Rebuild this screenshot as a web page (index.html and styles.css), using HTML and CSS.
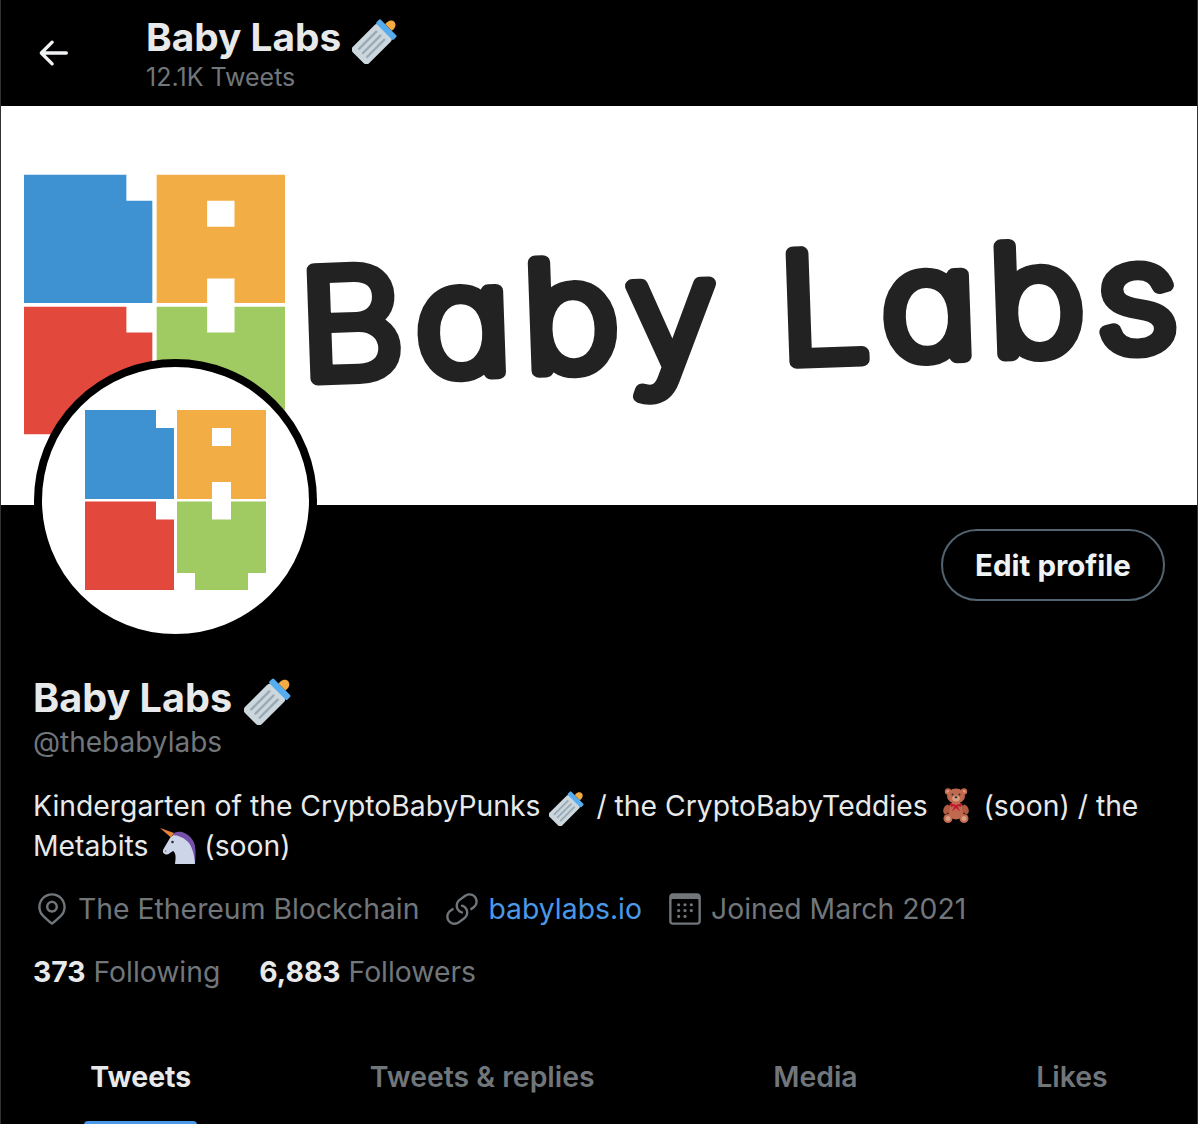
FILE: index.html
```html
<!DOCTYPE html>
<html lang="en">
<head>
  <meta charset="UTF-8">
  <title>Baby Labs (@thebabylabs)</title>
  <link rel="stylesheet" href="styles.css">
</head>
<body>
  <!-- shared drawings -->
  <svg class="defs" width="0" height="0" aria-hidden="true">
    <symbol id="logo" viewBox="0 0 181 180">
      <path fill="#3f92d2" d="M0 0H71V18H89V89H0Z"/>
      <path fill="#f2ae44" fill-rule="evenodd" d="M92 0H181V89H146V72H127V89H92ZM127 18V36H146V18Z"/>
      <path fill="#e2483b" d="M0 91.500H71V109.500H89V180H0Z"/>
      <path fill="#a0cb62" d="M92 91.500H127V109.500H146V91.500H181V163H163V180H110V163H92Z"/>
    </symbol>
    <symbol id="bottle" viewBox="0 0 36 36">
      <g transform="rotate(45 18 18)">
        <rect x="9.500" y="9" width="17" height="28" rx="3" fill="#ccd6dd"/>
        <path stroke="#99aab5" stroke-width="1.700" stroke-linecap="round" d="M13.800 14V32M18 14V32M22.200 14V32"/>
        <rect x="9" y="5.500" width="18" height="4.500" rx="1" fill="#55acee"/>
        <path fill="#f4ab43" d="M14.500 5.500V3.500C14.500 1 16.500-.5 18-.5S21.500 1 21.500 3.500V5.500Z"/>
      </g>
    </symbol>
    <symbol id="teddy" viewBox="0 0 28 36">
      <circle cx="6" cy="4" r="3.200" fill="#c1694f"/>
      <circle cx="22" cy="4" r="3.200" fill="#c1694f"/>
      <circle cx="6" cy="4" r="1.500" fill="#d99e82"/>
      <circle cx="22" cy="4" r="1.500" fill="#d99e82"/>
      <ellipse cx="14" cy="23" rx="8" ry="9" fill="#c1694f"/>
      <ellipse cx="14" cy="8.500" rx="9" ry="7.500" fill="#c1694f"/>
      <ellipse cx="14" cy="11" rx="3.800" ry="3" fill="#d99e82"/>
      <circle cx="10.500" cy="7" r="1" fill="#292f33"/>
      <circle cx="17.500" cy="7" r="1" fill="#292f33"/>
      <ellipse cx="14" cy="9.800" rx="1.400" ry="1" fill="#292f33"/>
      <ellipse cx="4.500" cy="22" rx="3" ry="5" fill="#af5a41" transform="rotate(20 4.500 22)"/>
      <ellipse cx="23.500" cy="22" rx="3" ry="5" fill="#af5a41" transform="rotate(-20 23.500 22)"/>
      <path fill="#be1931" d="M7.500 15.500 14 17.500 20.500 15.500 19 19.500 15.500 18.500 18 24 14 20.500 10 24 12.500 18.500 9 19.500Z"/>
      <circle cx="6" cy="31" r="4.500" fill="#c1694f"/>
      <circle cx="22" cy="31" r="4.500" fill="#c1694f"/>
      <circle cx="6" cy="31" r="2.500" fill="#d99e82"/>
      <circle cx="22" cy="31" r="2.500" fill="#d99e82"/>
    </symbol>
    <symbol id="unicorn" viewBox="0 0 36 36">
      <path fill="#ccd6e8" d="M35 36H15C16 29 16 25 13 23 11 24 8.500 27 6 26.500 3.500 26 2 24 3.500 21L10 10C13 6 18 5 23 7 30 10 35 18 35 26Z"/>
      <path fill="#7450a8" d="M12 7C14 4 18 3 22 4 29 6 34 12 35 18 36 24 35.500 30 35 36 34.500 28 33 21 29 15 25 10 18 7 12 7Z"/>
      <path fill="#e8833a" d="M0 0 14 5 11 9.500Z"/>
      <circle cx="12.500" cy="14" r="1.300" fill="#292f33"/>
      <circle cx="5.500" cy="23" r=".8" fill="#66757f"/>
    </symbol>
  </svg>

  <div class="page">
    <header class="topbar">
      <svg class="back" viewBox="0 0 24 24"><path d="M20 12H5M11.500 5.500 5 12l6.500 6.500"/></svg>
      <div class="topbar-text">
        <div class="title">Baby Labs <svg class="emoji emoji-title"><use href="#bottle"/></svg></div>
        <div class="tweet-count">12.1K Tweets</div>
      </div>
    </header>

    <div class="banner">
      <svg class="banner-logo"><use href="#logo"/></svg>
      <svg class="banner-word" viewBox="0 0 880 200">
        <text transform="translate(-2 173) rotate(-2) scale(1.09 1)">Baby Labs</text>
      </svg>
    </div>

    <section class="profile">
      <div class="avatar"><svg class="avatar-logo"><use href="#logo"/></svg></div>
      <div class="actions"><button class="edit-btn">Edit profile</button></div>

      <h1 class="name">Baby Labs <svg class="emoji emoji-title"><use href="#bottle"/></svg></h1>
      <div class="handle">@thebabylabs</div>

      <p class="bio">Kindergarten of the CryptoBabyPunks <svg class="emoji emoji-bio"><use href="#bottle"/></svg> / the CryptoBabyTeddies <svg class="emoji emoji-teddy"><use href="#teddy"/></svg> (soon) / the<br>Metabits <svg class="emoji emoji-unicorn"><use href="#unicorn"/></svg> (soon)</p>

      <div class="meta">
        <span class="meta-item">
          <svg class="meta-icon" viewBox="0 0 24 24"><path d="M12 14.315c-2.088 0-3.787-1.698-3.787-3.786S9.913 6.740 12 6.740s3.787 1.700 3.787 3.787-1.700 3.785-3.787 3.785zm0-6.073c-1.260 0-2.287 1.026-2.287 2.287S10.740 12.814 12 12.814s2.287-1.025 2.287-2.286S13.260 8.240 12 8.240z"/><path d="M20.692 10.690C20.692 5.900 16.792 2 12 2s-8.692 3.900-8.692 8.690c0 1.902.603 3.708 1.743 5.223l.003-.002.007.015c1.628 2.070 6.278 5.757 6.475 5.912.138.110.302.163.465.163.163 0 .327-.053.465-.162.197-.155 4.847-3.840 6.475-5.912l.007-.014.002.002c1.140-1.516 1.742-3.320 1.742-5.223zM12 20.290c-1.224-.990-4.520-3.715-5.756-5.285-.940-1.250-1.436-2.742-1.436-4.312C4.808 6.727 8.035 3.500 12 3.500s7.192 3.226 7.192 7.190c0 1.570-.497 3.062-1.436 4.313-1.236 1.570-4.532 4.294-5.756 5.285z"/></svg>
          The Ethereum Blockchain
        </span>
        <span class="meta-item">
          <svg class="meta-icon" viewBox="0 0 24 24"><path d="M11.960 14.945c-.067 0-.136-.010-.203-.027-1.130-.318-2.097-.986-2.795-1.932-.832-1.125-1.176-2.508-.968-3.893s.942-2.605 2.068-3.438l3.530-2.608c2.322-1.716 5.610-1.224 7.330 1.100.830 1.127 1.175 2.510.967 3.895s-.943 2.605-2.070 3.438l-1.480 1.094c-.333.246-.804.175-1.050-.158-.246-.334-.176-.804.158-1.050l1.480-1.095c.803-.592 1.327-1.463 1.476-2.450.148-.988-.098-1.975-.690-2.778-1.225-1.656-3.572-2.010-5.230-.784l-3.530 2.608c-.802.593-1.326 1.464-1.475 2.450-.150.990.097 1.975.690 2.778.498.675 1.187 1.150 1.992 1.377.400.114.633.528.520.928-.092.330-.394.547-.722.547z"/><path d="M7.270 22.054c-1.610 0-3.197-.735-4.225-2.125-.832-1.127-1.176-2.510-.968-3.894s.943-2.605 2.070-3.438l1.478-1.094c.334-.245.805-.175 1.050.158s.177.804-.157 1.050l-1.480 1.095c-.803.593-1.326 1.464-1.475 2.450-.148.990.097 1.975.690 2.778 1.225 1.657 3.570 2.010 5.230.785l3.528-2.608c1.658-1.225 2.010-3.570.785-5.230-.498-.674-1.187-1.150-1.992-1.376-.400-.113-.633-.527-.520-.927.112-.400.528-.630.926-.522 1.130.318 2.096.986 2.794 1.932 1.717 2.324 1.224 5.612-1.100 7.330l-3.530 2.608c-.933.693-2.023 1.026-3.105 1.026z"/></svg>
          <a class="link" href="#">babylabs.io</a>
        </span>
        <span class="meta-item">
          <svg class="meta-icon" viewBox="0 0 24 24"><path d="M19.708 2H4.292C3.028 2 2 3.028 2 4.292v15.416C2 20.972 3.028 22 4.292 22h15.416C20.972 22 22 20.972 22 19.708V4.292C22 3.028 20.972 2 19.708 2zm.792 17.708c0 .437-.355.792-.792.792H4.292c-.437 0-.792-.355-.792-.792V6.418c0-.437.354-.790.790-.792h15.420c.436 0 .790.355.790.790V19.710z"/><circle cx="8" cy="9.300" r="1"/><circle cx="12" cy="9.300" r="1"/><circle cx="16" cy="9.300" r="1"/><circle cx="8" cy="13" r="1"/><circle cx="12" cy="13" r="1"/><circle cx="16" cy="13" r="1"/><circle cx="8" cy="16.700" r="1"/><circle cx="12" cy="16.700" r="1"/></svg>
          Joined March 2021
        </span>
      </div>

      <div class="stats">
        <span class="stat"><b>373</b> Following</span>
        <span class="stat"><b>6,883</b> Followers</span>
      </div>
    </section>

    <nav class="tabs">
      <a class="tab active" href="#"><span>Tweets</span></a>
      <a class="tab" href="#"><span>Tweets &amp; replies</span></a>
      <a class="tab" href="#"><span>Media</span></a>
      <a class="tab" href="#"><span>Likes</span></a>
    </nav>
  </div>
</body>
</html>
```

FILE: styles.css
```css
* {
  box-sizing: border-box;
}
html, body {
  margin: 0;
  padding: 0;
  background-color: #000;
}
body {
  font-family: Inter, "Liberation Sans", sans-serif;
  color: #e7e9ea;
  overflow: hidden;
}
.defs {
  position: absolute;
}
.page {
  height: 1124px;
  overflow: hidden;
  border-left: 1px solid #2f3336;
  border-right: 1px solid #2f3336;
}

/* top bar */
.topbar {
  display: flex;
  align-items: center;
  height: 105px;
  padding-left: 32px;
}
.back {
  width: 40px;
  height: 40px;
  margin-right: 73px;
  fill: none;
  stroke: #eff3f4;
  stroke-width: 2;
  stroke-linecap: round;
  stroke-linejoin: round;
}
.topbar-text {
  padding-top: 3px;
}
.title {
  font-size: 38.800px;
  font-weight: 700;
  line-height: 44px;
  color: #e7e9ea;
}
.tweet-count {
  margin-top: 2px;
  font-size: 25px;
  line-height: 32px;
  color: #71767b;
}
.emoji {
  display: inline-block;
  overflow: visible;
}
.emoji-title {
  width: 49px;
  height: 49px;
  vertical-align: 1px;
  margin: -14px 0 -14px 2px;
}
.name .emoji-title {
  width: 51px;
  height: 51px;
  margin-left: 3px;
}
.emoji-bio {
  width: 38px;
  height: 38px;
  vertical-align: -8px;
  margin: -2px 1px;
}
.emoji-unicorn {
  width: 36px;
  height: 36px;
  vertical-align: -8px;
  margin: 0 0 0 4px;
}
.emoji-teddy {
  width: 28px;
  height: 37px;
  vertical-align: -8px;
  margin: 0 6px;
}

/* banner */
.banner {
  display: flex;
  align-items: center;
  height: 399px;
  margin-top: 1px;
  padding-left: 23px;
  background-color: #fff;
}
.banner-logo {
  flex: none;
  width: 261px;
  height: 261px;
  margin-top: -2px;
}
.banner-word {
  flex: none;
  width: 880px;
  height: 200px;
  margin-left: 18px;
  overflow: visible;
}
.banner-word text {
  font-family: Inter, sans-serif;
  font-size: 149px;
  font-weight: 200;
  font-feature-settings: "cv11";
  letter-spacing: 10.500px;
  word-spacing: -6px;
  fill: #222;
  stroke: #222;
  stroke-width: 14;
  stroke-linejoin: round;
}

/* profile */
.profile {
  position: relative;
  padding: 0 32px;
}
.avatar {
  position: absolute;
  left: 33px;
  top: -146px;
  display: flex;
  align-items: center;
  justify-content: center;
  width: 283px;
  height: 283px;
  border: 8px solid #000;
  border-radius: 50%;
  background-color: #fff;
}
.avatar-logo {
  width: 181px;
  height: 180px;
  margin-top: -1px;
}
.actions {
  display: flex;
  justify-content: flex-end;
  padding-top: 24px;
}
.edit-btn {
  width: 224px;
  height: 72px;
  padding: 0;
  border: 2px solid #536471;
  border-radius: 36px;
  background: none;
  color: #eff3f4;
  font-family: inherit;
  font-size: 29.500px;
  font-weight: 700;
}
.name {
  margin: 73px 0 0;
  font-size: 39.600px;
  font-weight: 700;
  line-height: 48px;
  color: #e7e9ea;
}
.handle {
  margin-top: 1px;
  font-size: 28px;
  line-height: 38px;
  color: #71767b;
}
.bio {
  margin: 25px 0 0;
  font-size: 28.300px;
  line-height: 40px;
  color: #e7e9ea;
}
.meta {
  display: flex;
  gap: 24px;
  margin-top: 23px;
  font-size: 28.350px;
  line-height: 40px;
  color: #71767b;
}
.meta-item {
  display: flex;
  align-items: center;
  gap: 7px;
}
.meta-icon {
  width: 38px;
  height: 38px;
  fill: #71767b;
}
.link {
  color: #4a99e9;
  text-decoration: none;
}
.stats {
  display: flex;
  gap: 39px;
  margin-top: 23px;
  font-size: 28.300px;
  line-height: 40px;
  color: #71767b;
}
.stat b {
  color: #e7e9ea;
  font-weight: 700;
}

/* tabs */
.tabs {
  display: flex;
  margin-top: 65px;
}
.tab {
  flex: 1 1 auto;
  display: flex;
  justify-content: center;
  color: #71767b;
  font-size: 28.400px;
  font-weight: 600;
  line-height: 40px;
  text-decoration: none;
}
.tab span {
  position: relative;
  display: block;
  padding-bottom: 32px;
}
.tab.active {
  color: #e7e9ea;
  font-weight: 700;
}
.tab.active span::after {
  content: "";
  position: absolute;
  left: -6px;
  right: -6px;
  bottom: 0;
  height: 8px;
  border-radius: 4px;
  background-color: #4a99e9;
}
```
